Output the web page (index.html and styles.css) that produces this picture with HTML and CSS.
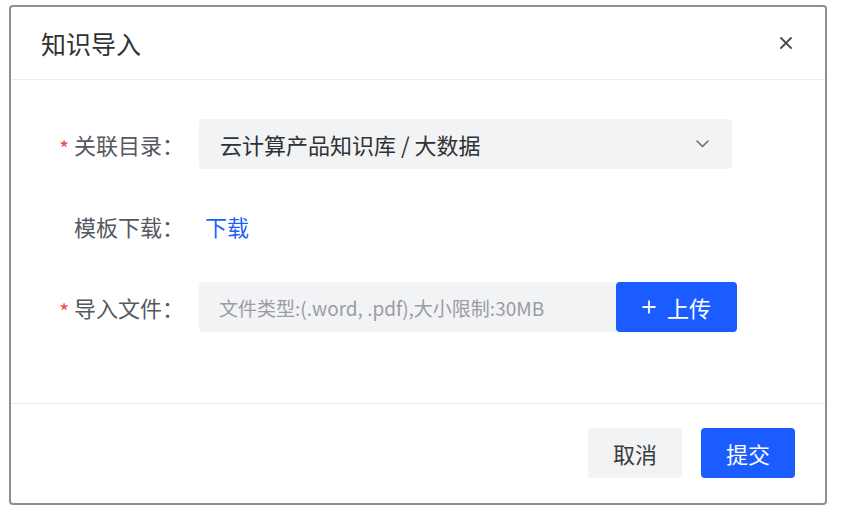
FILE: index.html
```html
<!DOCTYPE html>
<html lang="zh-CN">
<head>
<meta charset="utf-8">
<title>知识导入</title>
<link rel="stylesheet" href="styles.css">
</head>
<body>
<div class="dialog">
  <div class="dialog-header">
    <span class="dialog-title">知识导入</span>
    <span class="close-btn">
      <svg width="12" height="12" viewBox="0 0 12 12"><path d="M1 1 L11 11 M11 1 L1 11" stroke="#4a4a4a" stroke-width="1.8" stroke-linecap="round" fill="none"/></svg>
    </span>
  </div>
  <div class="dialog-body">
    <div class="form-row">
      <div class="form-label"><span class="req">*</span>关联目录：</div>
      <div class="select">
        <span class="select-text">云计算产品知识库 / 大数据</span>
        <svg class="chevron" width="13" height="8" viewBox="0 0 13 8"><path d="M1 1 L6.5 6.5 L12 1" stroke="#6b6f76" stroke-width="1.6" fill="none" stroke-linecap="round" stroke-linejoin="round"/></svg>
      </div>
    </div>
    <div class="form-row">
      <div class="form-label">模板下载：</div>
      <a class="link">下载</a>
    </div>
    <div class="form-row">
      <div class="form-label"><span class="req">*</span>导入文件：</div>
      <div class="upload-group">
        <div class="file-input">文件类型:(.word, .pdf),大小限制:30MB</div>
        <div class="upload-btn">
          <svg width="14" height="14" viewBox="0 0 14 14"><path d="M7 0.5 V13.5 M0.5 7 H13.5" stroke="#fff" stroke-width="1.8" fill="none"/></svg>
          <span>上传</span>
        </div>
      </div>
    </div>
  </div>
  <div class="dialog-footer">
    <div class="btn btn-default">取消</div>
    <div class="btn btn-primary">提交</div>
  </div>
</div>
</body>
</html>
```

FILE: styles.css
```css
html, body {
  margin: 0;
  padding: 0;
  background: #ffffff;
  font-family: "Noto Sans CJK SC", "Noto Sans", sans-serif;
  line-height: 1;
}

body {
  padding: 5px 0 0 9px;
}

.dialog {
  width: 814px;
  height: 496px;
  border: 2px solid #8d8f93;
  border-radius: 4px;
  background: #ffffff;
  display: flex;
  flex-direction: column;
}

.dialog-header {
  height: 73px;
  border-bottom: 1px solid #ebecf0;
  display: flex;
  align-items: center;
  justify-content: space-between;
  padding: 0 33px 0 30px;
  box-sizing: border-box;
  flex: none;
}

.dialog-title {
  font-size: 25px;
  color: #303133;
}

.close-btn {
  display: flex;
  width: 12px;
  height: 12px;
}

.dialog-body {
  flex: 1;
  padding-top: 39px;
  display: flex;
  flex-direction: column;
  gap: 31.5px;
}

.form-row {
  display: flex;
  align-items: center;
  height: 50px;
}

.form-label {
  width: 188px;
  padding-right: 15px;
  box-sizing: border-box;
  text-align: right;
  font-size: 22px;
  color: #555860;
  white-space: nowrap;
}

.req {
  color: #f04848;
  font-size: 21px;
  margin-right: 5px;
  position: relative;
  top: 3px;
}

.select {
  width: 533px;
  height: 50px;
  background: #f2f3f5;
  border-radius: 4px;
  display: flex;
  align-items: center;
  justify-content: space-between;
  padding: 0 23px 0 21px;
  box-sizing: border-box;
}

.select-text {
  font-size: 22px;
  color: #303133;
}

.link {
  margin-left: 6px;
  font-size: 22px;
  color: #1f5eff;
}

.upload-group {
  display: flex;
  height: 50px;
}

.file-input {
  width: 417px;
  height: 50px;
  background: #f2f3f5;
  border-radius: 4px 0 0 4px;
  padding-left: 20px;
  box-sizing: border-box;
  display: flex;
  align-items: center;
  font-size: 19px;
  color: #9a9ca3;
}

.upload-btn {
  width: 121px;
  height: 50px;
  background: #1a5cff;
  border-radius: 4px;
  display: flex;
  align-items: center;
  justify-content: center;
  gap: 11px;
  color: #ffffff;
  font-size: 22px;
}

.dialog-footer {
  height: 100px;
  border-top: 1px solid #ebecf0;
  box-sizing: border-box;
  display: flex;
  align-items: center;
  justify-content: flex-end;
  gap: 19px;
  padding: 0 30px 2px 0;
  flex: none;
}

.btn {
  width: 94px;
  height: 50px;
  border-radius: 4px;
  display: flex;
  align-items: center;
  justify-content: center;
  font-size: 22px;
}

.btn-default {
  background: #f2f3f5;
  color: #3a3c40;
}

.btn-primary {
  background: #1a5cff;
  color: #ffffff;
}
```
